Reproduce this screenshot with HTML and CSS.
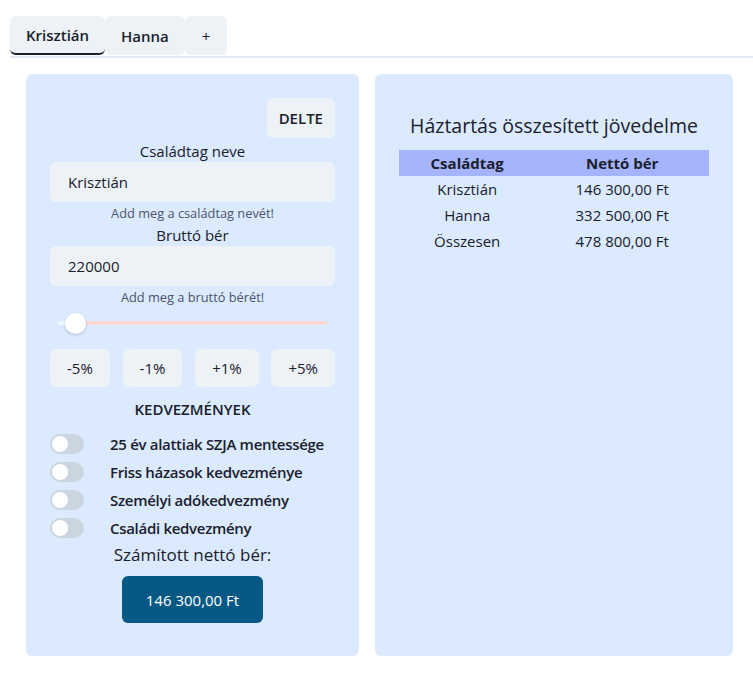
FILE: index.html
```html
<!DOCTYPE html>
<html lang="hu">
<head>
<meta charset="utf-8">
<title>Nettó bér kalkulátor</title>
<link rel="stylesheet" href="styles.css">
</head>
<body>
<div class="tabs">
  <button class="tab active">Krisztián</button>
  <button class="tab">Hanna</button>
  <button class="tab plus">+</button>
</div>
<main class="content">
  <section class="card member">
    <div class="top-row"><button class="btn delete">DELTE</button></div>
    <label class="field-label">Családtag neve</label>
    <div class="input">Krisztián</div>
    <div class="helper">Add meg a családtag nevét!</div>
    <label class="field-label">Bruttó bér</label>
    <div class="input">220000</div>
    <div class="helper">Add meg a bruttó bérét!</div>
    <div class="slider">
      <div class="track"><div class="fill"></div></div>
      <div class="thumb"></div>
    </div>
    <div class="pct-row">
      <button class="btn pct">-5%</button>
      <button class="btn pct">-1%</button>
      <button class="btn pct">+1%</button>
      <button class="btn pct">+5%</button>
    </div>
    <div class="section-title">KEDVEZMÉNYEK</div>
    <ul class="toggles">
      <li><span class="switch"><span class="knob"></span></span><span class="toggle-label">25 év alattiak SZJA mentessége</span></li>
      <li><span class="switch"><span class="knob"></span></span><span class="toggle-label">Friss házasok kedvezménye</span></li>
      <li><span class="switch"><span class="knob"></span></span><span class="toggle-label">Személyi adókedvezmény</span></li>
      <li><span class="switch"><span class="knob"></span></span><span class="toggle-label">Családi kedvezmény</span></li>
    </ul>
    <div class="net-label">Számított nettó bér:</div>
    <div class="net-row"><div class="net-value">146 300,00 Ft</div></div>
  </section>
  <section class="card summary">
    <h2 class="summary-title">Háztartás összesített jövedelme</h2>
    <table class="summary-table">
      <thead>
        <tr><th class="c1">Családtag</th><th>Nettó bér</th></tr>
      </thead>
      <tbody>
        <tr><td>Krisztián</td><td>146 300,00 Ft</td></tr>
        <tr><td>Hanna</td><td>332 500,00 Ft</td></tr>
        <tr><td>Összesen</td><td>478 800,00 Ft</td></tr>
      </tbody>
    </table>
  </section>
</main>
</body>
</html>
```
FILE: styles.css
```css
* { box-sizing: border-box; }
body {
  margin: 0;
  font-family: "Open Sans", "Noto Sans", "Liberation Sans", sans-serif;
  color: #1a202c;
  background: #ffffff;
}
button { font-family: inherit; color: inherit; border: 0; cursor: pointer; }

.tabs {
  margin: 16px 0 0 10px;
  display: flex;
  border-bottom: 2px solid #e2e8f0;
}
.tab {
  height: 39px;
  padding: 0 16px;
  background: #edf2f7;
  border-radius: 6px;
  font-size: 15px;
  font-weight: 600;
  margin-bottom: 1px;
}
.tab.active { border-bottom: 2px solid #1a202c; }
.tab.plus { font-weight: 400; padding: 0 17px; }

.content {
  display: grid;
  grid-template-columns: 333px 1fr;
  gap: 16px;
  padding: 16px 20px 22px 26px;
}
.card {
  background: #dbeafe;
  border-radius: 6px;
}
.member {
  padding: 24px 24px 33px;
  display: flex;
  flex-direction: column;
}
.top-row { display: flex; justify-content: flex-end; }
.btn {
  background: #edf2f7;
  border-radius: 6px;
  font-size: 15px;
}
.delete { height: 40px; padding: 0 12px; font-weight: 600; }

.field-label {
  display: block;
  text-align: center;
  font-size: 15px;
  line-height: 20px;
  margin-top: 3px;
}
.input {
  margin-top: 1px;
  height: 40px;
  background: #edf2f7;
  border-radius: 6px;
  padding-left: 18px;
  font-size: 15px;
  display: flex;
  align-items: center;
}
.helper {
  margin-top: 2px;
  text-align: center;
  font-size: 12.8px;
  line-height: 18px;
  color: #4a5568;
}
.slider {
  position: relative;
  margin: 7px 8px 0;
  height: 20px;
  display: flex;
  align-items: center;
}
.track {
  width: 100%;
  height: 4px;
  background: #fed7d7;
  border-radius: 2px;
}
.fill { width: 18px; height: 4px; background: #e6fbff; border-radius: 2px; }
.thumb {
  position: absolute;
  left: 7px;
  top: 0;
  width: 21px;
  height: 21px;
  border-radius: 50%;
  background: #ffffff;
  box-shadow: 0 1px 3px rgba(0,0,0,0.2);
}
.pct-row {
  margin-top: 16px;
  display: flex;
  justify-content: space-between;
}
.pct { height: 38px; padding: 0 17px; }

.section-title {
  margin-top: 12px;
  text-align: center;
  font-size: 15px;
  line-height: 20px;
  font-weight: 600;
}
.toggles {
  list-style: none;
  margin: 11px 0 0;
  padding: 0;
}
.toggles li {
  height: 28px;
  display: flex;
  align-items: center;
}
.switch {
  width: 34px;
  height: 20px;
  border-radius: 10px;
  background: #cbd5e0;
  padding: 2px;
  display: flex;
  flex: none;
}
.knob { width: 16px; height: 16px; border-radius: 50%; background: #ffffff; }
.toggle-label {
  margin-left: 26px;
  font-size: 15px;
  font-weight: 600;
  letter-spacing: -0.3px;
}
.net-label {
  margin-top: 2px;
  text-align: center;
  font-size: 17px;
  line-height: 22px;
}
.net-row { margin-top: 10px; display: flex; justify-content: center; }
.net-value {
  width: 141px;
  height: 47px;
  background: #075985;
  color: #ffffff;
  border-radius: 6px;
  font-size: 15px;
  display: flex;
  align-items: center;
  justify-content: center;
}

.summary { padding: 38px 24px 24px; }
.summary-title {
  margin: 0;
  text-align: center;
  font-size: 19.5px;
  font-weight: 500;
  line-height: 28px;
}
.summary-table {
  margin-top: 10px;
  width: 100%;
  border-collapse: collapse;
  font-size: 15px;
}
.summary-table th {
  background: #a5b4fc;
  height: 26px;
  font-weight: 700;
  padding: 0;
}
.summary-table th.c1 { width: 44%; }
.summary-table td {
  height: 26px;
  text-align: center;
  padding: 0;
}
```
